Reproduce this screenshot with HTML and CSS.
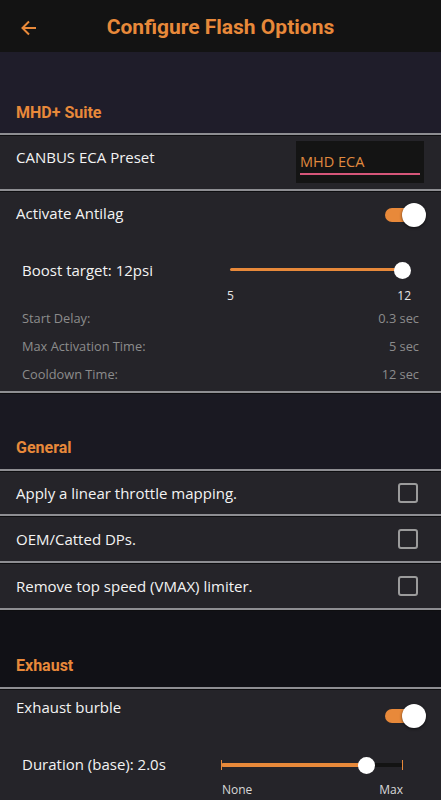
FILE: index.html
```html
<!DOCTYPE html>
<html>
<head>
<meta charset="utf-8">
<link rel="stylesheet" href="styles.css">
</head>
<body>
<div class="app">
  <header class="topbar">
    <svg class="back" width="18" height="18" viewBox="0 0 18 18"><path d="M16 9H3M9 2.5L2.5 9 9 15.5" fill="none" stroke="#e8893a" stroke-width="2"/></svg>
    <h1 class="title">Configure Flash Options</h1>
  </header>

  <div class="section-head s1"><span>MHD+ Suite</span></div>
  <div class="divider"></div>
  <div class="row row-preset">
    <span class="label">CANBUS ECA Preset</span>
    <div class="input"><span>MHD ECA</span></div>
  </div>
  <div class="divider"></div>
  <div class="group antilag">
    <div class="toggle-row">
      <span class="label">Activate Antilag</span>
      <div class="toggle"><div class="knob"></div></div>
    </div>
    <div class="slider-row boost">
      <span class="label">Boost target: 12psi</span>
      <div class="slider">
        <div class="track"><div class="fill" style="width:100%"></div></div>
        <div class="thumb" style="left:100%"></div>
      </div>
    </div>
    <div class="scale boost-scale"><span>5</span><span>12</span></div>
    <div class="info-row"><span>Start Delay:</span><span>0.3 sec</span></div>
    <div class="info-row"><span>Max Activation Time:</span><span>5 sec</span></div>
    <div class="info-row"><span>Cooldown Time:</span><span>12 sec</span></div>
  </div>
  <div class="divider"></div>

  <div class="section-head s2"><span>General</span></div>
  <div class="divider"></div>
  <div class="row check-row first"><span class="label">Apply a linear throttle mapping.</span><div class="checkbox"></div></div>
  <div class="divider"></div>
  <div class="row check-row"><span class="label">OEM/Catted DPs.</span><div class="checkbox"></div></div>
  <div class="divider"></div>
  <div class="row check-row"><span class="label">Remove top speed (VMAX) limiter.</span><div class="checkbox"></div></div>
  <div class="divider"></div>

  <div class="section-head s3"><span>Exhaust</span></div>
  <div class="divider"></div>
  <div class="group exhaust">
    <div class="toggle-row">
      <span class="label">Exhaust burble</span>
      <div class="toggle"><div class="knob"></div></div>
    </div>
    <div class="slider-row duration">
      <span class="label">Duration (base): 2.0s</span>
      <div class="slider ticked">
        <div class="track dark"><div class="fill" style="width:80%"></div></div>
        <div class="tick tl"></div><div class="tick tr"></div>
        <div class="thumb" style="left:80%"></div>
      </div>
    </div>
    <div class="scale dur-scale"><span>None</span><span>Max</span></div>
  </div>
</div>
</body>
</html>
```

FILE: styles.css
```css
* { box-sizing: border-box; }
html, body { margin: 0; padding: 0; }
body {
  background: #252429;
  font-family: "Open Sans", "Noto Sans", sans-serif;
  color: #f2f2f2;
  overflow: hidden;
}
.app { width: 441px; height: 800px; overflow: hidden; }

.topbar {
  height: 52px;
  background: #131313;
  display: flex;
  align-items: center;
  position: relative;
}
.back { position: absolute; left: 20px; top: 19px; }
.title {
  margin: 0 auto;
  font-family: Roboto, "Liberation Sans", sans-serif;
  font-weight: 700;
  font-size: 21px;
  color: #e8893a;
  padding-top: 2px;
}

.section-head {
  display: flex;
  align-items: flex-end;
  padding: 0 16px;
  font-family: Roboto, "Liberation Sans", sans-serif;
  font-weight: 700;
  font-size: 16px;
  line-height: 20px;
  color: #e8893a;
}
.s1 { height: 81px; background: #1f1d2a; padding-bottom: 10px; }
.s2 { height: 75px; background: #1a1922; padding-bottom: 11px; }
.s3 { height: 76px; background: #111116; padding-bottom: 11px; }

.divider {
  height: 3px;
  background: #0e0e10;
  border-top: 2px solid #8e8e92;
}

.label { font-size: 15px; line-height: 20px; color: #f3f3f3; }

.row { display: flex; justify-content: space-between; padding: 0 16px; }
.row-preset { height: 53px; align-items: flex-start; padding-top: 11px; padding-right: 17px; }
.input {
  width: 128px;
  height: 42px;
  margin-top: -6px;
  background: #141414;
  padding: 11px 4px 0 4px;
}
.input span {
  display: block;
  color: #e08a3f;
  font-size: 14.5px;
  line-height: 20px;
  padding-bottom: 1px;
  border-bottom: 2px solid #d6567a;
}

.group { padding: 0 16px; }
.antilag { height: 199px; }
.toggle-row {
  display: flex;
  justify-content: space-between;
  align-items: flex-start;
  padding-top: 11px;
  height: 45px;
}
.toggle {
  width: 36px;
  height: 14px;
  background: #e8893a;
  border-radius: 7px;
  position: relative;
  margin-top: 5px;
  margin-right: 4px;
}
.knob {
  position: absolute;
  right: -5px;
  top: -5px;
  width: 24px;
  height: 24px;
  border-radius: 50%;
  background: #fff;
  box-shadow: 0 1px 3px rgba(0,0,0,0.6);
}

.slider-row {
  display: flex;
  align-items: center;
  padding-left: 6px;
  height: 51px;
  padding-top: 15px;
}
.slider-row .label { flex: 0 0 208px; }
.slider { position: relative; height: 16px; flex: 0 0 172px; }
.track {
  position: absolute; left: 0; right: 0; top: 6px; height: 3px;
  border-radius: 2px;
}
.track .fill { height: 100%; background: #e8893a; border-radius: 2px; }
.track.dark { background: #131313; height: 4px; }
.thumb {
  position: absolute; top: 0; width: 17px; height: 17px; margin-left: -8px;
  border-radius: 50%; background: #fff;
}
.exhaust .toggle-row { padding-top: 9px; height: 42px; }
.exhaust .label:first-child { margin-top: -2px; }
.exhaust .toggle { margin-top: 10px; }
.duration { height: 56px; padding-top: 9px; }
.duration .label { flex: 0 0 199px; }
.duration .slider { flex: 0 0 182px; }
.tick { position: absolute; top: 3px; width: 1px; height: 10px; background: #e8893a; }
.tl { left: 0; }
.tr { right: 0; }
.ticked .thumb { margin-left: -9px; }

.scale {
  display: flex;
  justify-content: space-between;
  font-size: 12px;
  line-height: 16px;
  color: #e6e6e6;
  font-weight: 500;
}
.boost-scale { margin-left: 211px; width: 184px; }
.dur-scale { margin-left: 206px; width: 181px; color: #d8d8d8; margin-top: -6px; }

.info-row {
  display: flex;
  justify-content: space-between;
  padding-left: 6px;
  padding-right: 6px;
  height: 28px;
  align-items: center;
  font-size: 12.8px;
  color: #8c8c8c;
}

.check-row { height: 44px; align-items: center; }
.check-row.first { height: 42px; }
.checkbox {
  width: 20px; height: 20px;
  border: 2px solid #9b9b9b;
  border-radius: 3px;
  margin-right: 7px;
}
.exhaust { height: 120px; }
```
